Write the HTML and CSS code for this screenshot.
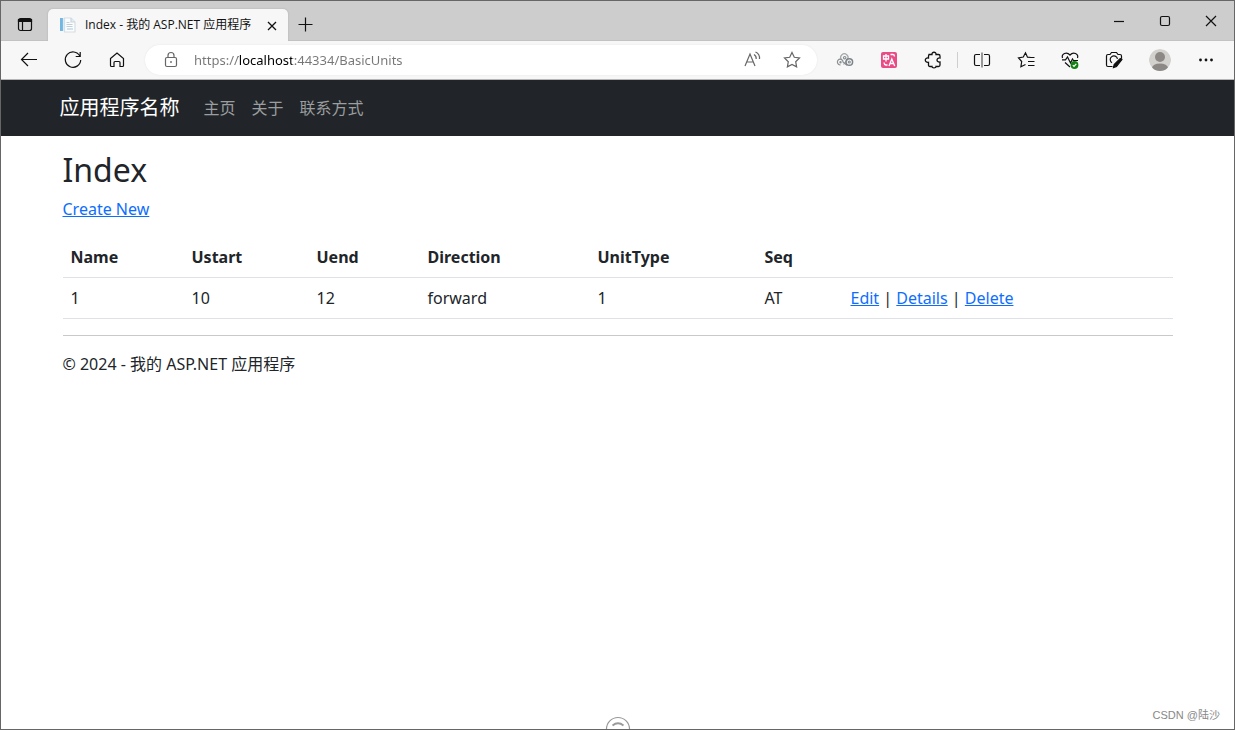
FILE: index.html
```html
<!DOCTYPE html>
<html lang="zh-CN">
<head>
<meta charset="utf-8">
<title>Index - 我的 ASP.NET 应用程序</title>
<link rel="stylesheet" href="styles.css">
</head>
<body>
<div class="window">
  <header class="tab-strip">
    <button class="icon-btn tab-menu" aria-label="Tab actions"><svg viewBox="0 0 20 20"><rect x="3.5" y="4.5" width="13" height="12" rx="2"/><path d="M3.5 5.500h13v2h-13z" fill="currentColor"/><path d="M7.500 8v8"/></svg></button>
    <div class="tab">
      <svg class="favicon" viewBox="0 0 16 16"><path d="M4.500 1h6.500l4 4v10H4.500z" fill="#fafcfd" stroke="#d5dee4"/><path d="M11 1v4h4" fill="#e2edf4" stroke="#c9d6de"/><path d="M0 1h3v13H0z" fill="#72b7e2" stroke="none"/><path d="M3.500 1v13" stroke="#dcebf4"/><path d="M6.500 5.500h3M6.500 7.500h6M6.500 9.500h6" stroke="#c3cfd7"/><path d="M7 11h6v2H7z" fill="#d3e1ea" stroke="none"/></svg>
      <span class="tab-title">Index - 我的 ASP.NET 应用程序</span>
      <button class="icon-btn tab-close" aria-label="Close tab"><svg viewBox="0 0 20 20"><path d="M6 7l8 8M14 7l-8 8" stroke-width="1.300"/></svg></button>
    </div>
    <button class="icon-btn new-tab" aria-label="New tab"><svg viewBox="0 0 20 20"><path d="M10.500 3.500v14M3.500 10.500h14"/></svg></button>
    <div class="window-controls">
      <button class="icon-btn" aria-label="Minimize"><svg viewBox="0 0 20 20"><path d="M5 10.500h10"/></svg></button>
      <button class="icon-btn" aria-label="Maximize"><svg viewBox="0 0 20 20"><rect x="5.500" y="5.500" width="9" height="9" rx="1.500"/></svg></button>
      <button class="icon-btn" aria-label="Close"><svg viewBox="0 0 20 20"><path d="M5 5l10 10M15 5L5 15" stroke-width="1.200"/></svg></button>
    </div>
  </header>

  <div class="toolbar">
    <button class="icon-btn" aria-label="Back"><svg viewBox="0 0 20 20"><path d="M18 9.500H2.500M9 3L2.500 9.500 9 16"/></svg></button>
    <button class="icon-btn" aria-label="Refresh"><svg viewBox="0 0 20 20"><path d="M16.800 6A7.700 7.700 0 1 0 17.700 10M17.200 2v4.500h-4.500"/></svg></button>
    <button class="icon-btn" aria-label="Home"><svg viewBox="0 0 20 20"><path d="M3.500 8.500L10 3l6.500 5.500v7q0 1-1 1h-2.500v-4q0-1-1-1h-4q-1 0-1 1v4H4.500q-1 0-1-1z"/></svg></button>
    <div class="address">
      <svg class="lock" viewBox="0 0 20 20"><rect x="4.500" y="7.500" width="11" height="9" rx="1.500"/><path d="M7 7.500V5.500a3 3 0 0 1 6 0v2"/><circle cx="10" cy="12" r=".9" fill="currentColor" stroke="none"/></svg>
      <input class="url" type="text" aria-label="Address" value="https://localhost:44334/BasicUnits">
      <button class="icon-btn muted" aria-label="Read aloud"><svg viewBox="0 0 20 20"><path d="M3 16L8 4l5 12M4.700 12h6.600M12 4.500q2.500 1.500 2.200 4.500M13.500 2q4.500 2 4 7"/></svg></button>
      <button class="icon-btn muted" aria-label="Add to favorites"><svg viewBox="0 0 20 20"><path d="M10 2.500l2.300 4.800 5.200.7-3.800 3.700.9 5.200L10 14.400l-4.600 2.500.9-5.200L2.500 8l5.200-.7z"/></svg></button>
    </div>
    <button class="icon-btn" aria-label="Rings extension"><svg class="rings" viewBox="0 0 20 20"><path d="M6.200 9.500A3.700 3.700 0 1 1 12.500 9.500L8.500 14.500" stroke="#a3a8a8"/><circle cx="9.700" cy="7.700" r="1.200"/><path d="M5.500 14.800A2.800 2.800 0 1 1 8 12L12 15.300"/><circle cx="5.500" cy="12.200" r=".6"/><circle cx="14.300" cy="12" r="3.300" stroke="#7b848a" stroke-width="1.500"/><circle cx="14.300" cy="12" r="1"/></svg></button>
    <button class="icon-btn" aria-label="Translate extension"><svg viewBox="0 0 20 20"><rect x="2" y="2" width="16" height="16" rx="2" fill="#e94b86" stroke="none"/><g stroke="#fff" stroke-width="1.300"><path d="M4.500 6h5v3h-5zM7 4v7.500M11.500 4.500h2.500q1.500 0 1.500 2M5 12.500q0 2 2 2.500h1.500M10 16l2.800-7 2.900 7M11 13.500h3.700"/></g></svg></button>
    <button class="icon-btn" aria-label="Extensions"><svg viewBox="0 0 20 20"><path d="M6 4.500h3C8.600 1.500 13.400 1.500 13 4.500h2.500q1.500 0 1.500 1.500v2c-4-.5-4 4.500 0 4V15q0 1.500-1.500 1.500H13c.4 1.800-4.400 1.800-4 0H7Q5.500 16.500 5.500 15v-2.700c-4.300.6-4.300-5 0-4.300V6z" stroke-width="1.300"/></svg></button>
    <span class="separator"></span>
    <button class="icon-btn" aria-label="Split screen"><svg viewBox="0 0 20 20"><path d="M8 4.500H4Q2.500 4.500 2.500 6v8Q2.500 15.500 4 15.500h4M12 4.500h4q1.500 0 1.500 1.500v8q0 1.500-1.500 1.500h-4"/><path d="M10 2.500v15" stroke="#555"/></svg></button>
    <button class="icon-btn" aria-label="Favorites"><svg viewBox="0 0 20 20"><path d="M15 7.500l-3.500-.3L9.500 2.800 7.300 7l-4.800.8 3.200 3.700-.8 5.200 4.600-2.200M12 7.500h6.500M12 11.500h6.500M12 15.500h6.500"/></svg></button>
    <button class="icon-btn" aria-label="Browser essentials"><svg viewBox="0 0 20 20"><path d="M2.500 8C1.200 4 6.500 1 10 5c3.500-4 8.800-1 7.500 3M5 12.500l5 4.500M2 9.800h3.500L7.500 7l3 6 2-4 1 1.500H18"/><circle cx="14.500" cy="15" r="3.900" fill="#128012" stroke="none"/><path d="M12.800 15.200l1.200 1.200 2.300-2.500" stroke="#fff"/></svg></button>
    <button class="icon-btn" aria-label="Web capture"><svg viewBox="0 0 20 20"><path d="M8.500 16.500H4Q2.500 16.500 2.500 15V6Q2.500 4.500 4 4.500h2L7.500 2.500h5L14 4.500h2q1.500 0 1.500 1.500v2"/><path d="M8 12.800a3.700 3.700 0 1 1 5.500-4"/><path d="M9.500 17.500l.7-3 5.800-5.800q1.500-.7 2 .8L12.500 16.500z" fill="currentColor"/></svg></button>
    <button class="icon-btn profile" aria-label="Profile"><svg viewBox="0 0 22 22"><defs><clipPath id="disc"><circle cx="11" cy="11" r="11"/></clipPath></defs><g clip-path="url(#disc)" stroke="none"><circle cx="11" cy="11" r="11" fill="#d3d1ce"/><circle cx="11" cy="8" r="5" fill="#8c8886"/><ellipse cx="11" cy="19" rx="8" ry="4.500" fill="#8c8886"/></g></svg></button>
    <button class="icon-btn" aria-label="Settings and more"><svg viewBox="0 0 20 20"><g fill="currentColor" stroke="none"><circle cx="4.500" cy="10" r="1.400"/><circle cx="10" cy="10" r="1.400"/><circle cx="15.500" cy="10" r="1.400"/></g></svg></button>
  </div>

  <nav class="navbar">
    <div class="container nav-inner">
      <a class="brand" href="#">应用程序名称</a>
      <a class="nav-link" href="#">主页</a>
      <a class="nav-link" href="#">关于</a>
      <a class="nav-link" href="#">联系方式</a>
    </div>
  </nav>

  <main class="container content">
    <h2>Index</h2>
    <p><a href="#">Create New</a></p>
    <table>
      <colgroup><col class="c-name"><col class="c-start"><col class="c-end"><col class="c-direction"><col class="c-type"><col class="c-seq"><col></colgroup>
      <thead>
        <tr><th scope="col">Name</th><th scope="col">Ustart</th><th scope="col">Uend</th><th scope="col">Direction</th><th scope="col">UnitType</th><th scope="col">Seq</th><td></td></tr>
      </thead>
      <tbody>
        <tr><td>1</td><td>10</td><td>12</td><td>forward</td><td>1</td><td>AT</td><td><a href="#">Edit</a> | <a href="#">Details</a> | <a href="#">Delete</a></td></tr>
      </tbody>
    </table>
    <hr>
    <footer>© 2024 - 我的 ASP.NET 应用程序</footer>
  </main>

  <button class="pull-up" aria-label="Expand"><svg viewBox="0 0 26 13"><path d="M1.500 13a11.500 11.500 0 0 1 23 0" fill="#fff"/><path d="M7.500 9.500Q13 5 18.500 9.500" stroke-width="1.800"/></svg></button>
  <span class="watermark">CSDN @陆沙</span>
</div>
</body>
</html>
```
FILE: styles.css
```css
* { box-sizing: border-box; }
body {
  margin: 0;
  font: 16px/24px "Noto Sans", "Noto Sans CJK SC", sans-serif;
  color: #212529;
}
.window {
  position: relative;
  display: flex;
  flex-direction: column;
  min-height: 100vh;
  border: 1px solid #666;
  background: #fff;
}
svg { display: block; width: 20px; height: 20px; fill: none; stroke: currentColor; stroke-width: 1.2; }
.icon-btn {
  display: flex;
  align-items: center;
  justify-content: center;
  flex: none;
  width: 44px;
  height: 36px;
  padding: 0;
  border: 0;
  background: none;
  color: #111;
}
.tab-strip {
  display: flex;
  align-items: flex-end;
  height: 40px;
  background: #cdcdcd;
  border-bottom: 1px solid #c2c2c2;
}
.tab-menu { width: 47px; height: 32px; }
.tab {
  display: flex;
  align-items: center;
  width: 240px;
  height: 32px;
  margin-bottom: -1px;
  padding-left: 12px;
  border-radius: 5px 5px 0 0;
  background: #f7f7f7;
  box-shadow: 0 0 2px #aaa;
  clip-path: inset(-3px -3px 0 -3px);
}
.favicon { width: 16px; height: 16px; }
.tab-title {
  flex: 1;
  margin-left: 9px;
  font-family: "Open Sans", "Noto Sans CJK SC", sans-serif;
  font-size: 12px;
  color: #111;
  white-space: nowrap;
}
.tab-close { width: 32px; height: 32px; }
.new-tab { width: 34px; height: 32px; }
.window-controls { display: flex; margin-left: auto; align-self: flex-start; }
.window-controls .icon-btn { width: 46px; height: 40px; }
.toolbar {
  display: flex;
  align-items: center;
  height: 39px;
  padding: 0 6px;
  background: #f7f7f7;
  border-bottom: 1px solid #b5b5b5;
}
.address {
  display: flex;
  align-items: center;
  flex: 1;
  height: 30px;
  margin: 0 6px;
  padding: 0 5px 0 16px;
  border-radius: 15px;
  background: #fff;
  box-shadow: 0 0 2px #e4e4e4;
}
.lock { flex: none; color: #666; }
.url {
  flex: 1;
  min-width: 0;
  margin-left: 13px;
  padding: 0;
  border: 0;
  outline: 0;
  font: 13px/20px "Noto Sans", sans-serif;
  color: transparent;
  background: linear-gradient(90deg, #767676 44px, #000 44px 98px, #767676 98px);
  background-clip: text;
  -webkit-background-clip: text;
}
.muted { width: 40px; height: 30px; color: #666; }
.rings { color: #8a8f92; }
.separator { width: 1px; height: 16px; margin: 0 2px; background: #cfcfcf; }
.profile { width: 48px; }
.profile svg { width: 22px; height: 22px; }
.container { width: 100%; max-width: 1140px; margin: 0 auto; }
.navbar { background: #212529; }
.nav-inner { display: flex; align-items: center; height: 56px; padding: 0 12px; }
.brand { margin-right: 16px; font-size: 20px; line-height: 30px; color: #fff; text-decoration: none; }
.nav-link { padding: 8px; color: #9b9d9f; text-decoration: none; }
.content { padding: 15px; }
h2 { margin: 0 0 8px; font-size: 32px; font-weight: 400; line-height: 38px; }
p { margin: 0 0 16px; }
a { color: #0d6efd; }
table { width: 100%; table-layout: fixed; border-collapse: collapse; }
th, td { padding: 8px; border-bottom: 1px solid #dee2e6; text-align: left; }
th { font-weight: 700; }
.c-name { width: 121px; }
.c-start { width: 125px; }
.c-end { width: 111px; }
.c-direction { width: 170px; }
.c-type { width: 167px; }
.c-seq { width: 86px; }
hr { margin: 16px 0; border: 0; border-top: 1px solid #c8c9ca; }
.pull-up {
  position: absolute;
  bottom: 0;
  left: 50%;
  width: 26px;
  height: 13px;
  margin-left: -13px;
  padding: 0;
  border: 0;
  background: none;
  color: #999;
}
.pull-up svg { width: 26px; height: 13px; }
.watermark {
  position: absolute;
  right: 14px;
  bottom: 4px;
  font-family: "Liberation Sans", "Noto Sans CJK SC", sans-serif;
  font-size: 11px;
  line-height: 20px;
  color: #888;
}
```
